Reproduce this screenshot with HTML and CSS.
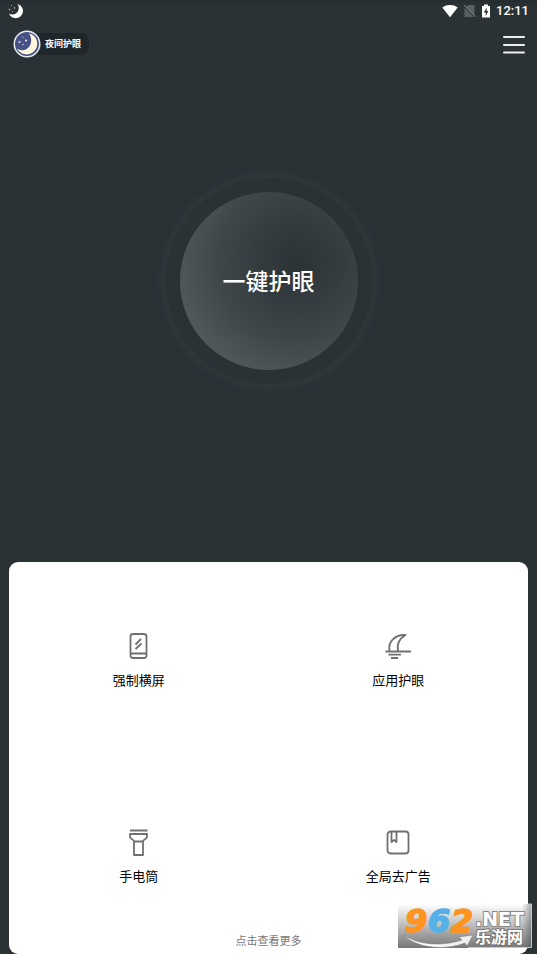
FILE: index.html
```html
<!DOCTYPE html>
<html lang="zh-CN">
<head>
<meta charset="utf-8">
<meta name="viewport" content="width=device-width, initial-scale=1">
<title>夜间护眼</title>
<link rel="stylesheet" href="styles.css">
</head>
<body>
<div class="status">
  <svg class="status-moon" width="16" height="16" viewBox="0 0 16 16" aria-hidden="true">
    <path d="M9.5 1A7.2 7.2 0 1 1 1 10.500C4 12.500 8 11.500 9.800 8.500C11.300 6 11 3 9.500 1Z" fill="#fff"/>
    <g fill="#b9bec0"><circle cx="1.500" cy="6.500" r=".8"/><circle cx="6.500" cy="5" r=".8"/><circle cx="3.500" cy="2.500" r=".5"/><circle cx="4.500" cy="8.500" r=".6"/></g>
  </svg>
  <div class="status-right">
    <svg width="16" height="14" viewBox="0 0 16 14" aria-hidden="true"><path d="M.3 3.500C4.500.2 11.500.2 15.700 3.500L8 13.300Z" fill="#fff"/></svg>
    <svg width="13" height="14" viewBox="0 0 13 14" aria-hidden="true"><path d="M5 1H11.500V13H1.500V4.500Z" fill="#596063"/><path d="M.5 1.500L12 13.500" stroke="#283033" stroke-width="1.500"/><path d="M1 1L12.500 13" stroke="#8b9092" stroke-width="1"/></svg>
    <svg width="10" height="14" viewBox="0 0 10 14" aria-hidden="true"><path d="M3 .5H7V2H9V13.500H1V2H3Z" fill="#fff"/><path d="M5.800 3.500L2.800 8.500H4.700V12L7.400 7H5.600Z" fill="#283033"/></svg>
    <span class="clock">12:11</span>
  </div>
</div>
<header class="header">
  <div class="brand">
    <svg class="brand-icon" width="28" height="28" viewBox="0 0 28 28" aria-hidden="true">
      <circle cx="14" cy="14" r="13.500" fill="#e9edf2"/>
      <circle cx="14" cy="14" r="12" fill="#465286"/>
      <path d="M16 3.300A10.700 10.700 0 1 1 4 18.500C8 21.500 14 20.500 16.700 16C19 12 18.500 7 16 3.300Z" fill="#fff8df"/>
      <g fill="#e8e7df"><circle cx="6.500" cy="12" r="1"/><circle cx="13" cy="10.500" r="1.100"/><circle cx="10" cy="7" r=".6"/><circle cx="10" cy="14.500" r=".7"/></g>
    </svg>
    <span class="brand-name">夜间护眼</span>
  </div>
  <button class="menu" type="button" aria-label="菜单">
    <svg width="24" height="20" viewBox="0 0 24 20"><path d="M2 3H22M2 11H22M2 18.500H22" stroke="#eceeee" stroke-width="2" stroke-linecap="round"/></svg>
  </button>
</header>
<main class="main">
  <section class="hero">
    <div class="ring"><button class="power" type="button">一键护眼</button></div>
  </section>
  <section class="sheet">
    <div class="tools">
      <button class="tool" type="button">
        <svg width="28" height="28" viewBox="0 0 28 28"><rect x="5.500" y="2" width="16" height="24" rx="2.500"/><path d="M5.500 21.500H21.500M10.500 12.500L16 7M10.500 17L16.500 11.500"/></svg>
        <span>强制横屏</span>
      </button>
      <button class="tool" type="button">
        <svg width="28" height="28" viewBox="0 0 28 28"><path d="M1.500 19.500H27M4.500 22.700H17M7 26H14M5.500 19C4 10.500 10 2.500 21.500 3C16.500 6 12.500 11.500 14 19"/></svg>
        <span>应用护眼</span>
      </button>
      <button class="tool" type="button">
        <svg width="28" height="28" viewBox="0 0 28 28"><path d="M5 2.500H22.500M5 6H22V9C22 11 18 11.500 18 13.500H9C9 11.500 5 11 5 9ZM9 13.500V27H18V13.500"/></svg>
        <span>手电筒</span>
      </button>
      <button class="tool" type="button">
        <svg width="28" height="28" viewBox="0 0 28 28"><rect x="3.500" y="3.500" width="21" height="22" rx="3"/><path d="M7.500 4V14L10 12L12.500 14V4"/></svg>
        <span>全局去广告</span>
      </button>
    </div>
    <a class="more" href="#">点击查看更多</a>
  </section>
</main>
<svg class="mark" width="134" height="44" viewBox="0 0 134 44" role="img" aria-label="962.NET 乐游网">
  <defs>
    <linearGradient id="shade" x1="0" y1="0" x2="0" y2="1"><stop offset="0" stop-color="#fff"/><stop offset=".4" stop-color="#c8c8c8"/><stop offset="1" stop-color="#777"/></linearGradient>
    <linearGradient id="swoosh" x1="0" y1="0" x2="1" y2="0"><stop offset="0" stop-color="#fff"/><stop offset="1" stop-color="#eee"/></linearGradient>
    <linearGradient id="edge" x1="0" y1="0" x2="1" y2="0"><stop offset="0" stop-color="#39434a" stop-opacity="0"/><stop offset="1" stop-color="#39434a" stop-opacity=".45"/></linearGradient>
  </defs>
  <rect width="134" height="44" fill="url(#shade)"/>
  <rect x="124" width="10" height="44" fill="url(#edge)"/>
  <path d="M130 0H133.500V43.500H70" fill="none" stroke="#c8c8c8"/>
  <path d="M6 31C22 42 46 42 64 36L61 33L75 31L69 42L67 39C46 47 18 44 6 31Z" fill="url(#swoosh)" stroke="#777" stroke-width=".5"/>
  <g class="mark-number"><text class="orange" x="7" y="28">9</text><text class="blue" x="30" y="28">6</text><text class="orange" x="53" y="28">2</text></g>
  <text class="mark-net" x="77" y="22">.NET</text>
  <text class="mark-name" x="77" y="39">乐游网</text>
</svg>
</body>
</html>
```

FILE: styles.css
```css
* {
  box-sizing: border-box;
}

body {
  margin: 0;
  min-height: 100vh;
  display: flex;
  flex-direction: column;
  position: relative;
  background: #2a3236;
  color: #fff;
  font-family: Roboto, "Noto Sans CJK SC", sans-serif;
}

button {
  border: 0;
  padding: 0;
  background: none;
  color: inherit;
  font: inherit;
  cursor: pointer;
}

svg {
  display: block;
}

.status {
  display: flex;
  justify-content: space-between;
  align-items: center;
  height: 22px;
  padding: 0 8px;
  background: linear-gradient(#252d30, #2a3236 6px);
}

.status-right {
  display: flex;
  align-items: center;
  gap: 5px;
}

.clock {
  font-size: 13px;
  line-height: 22px;
  font-weight: 500;
}

.header {
  display: flex;
  justify-content: space-between;
  align-items: center;
  height: 44px;
  padding: 0 11px 0 13px;
}

.brand {
  display: flex;
  align-items: center;
}

.brand-name {
  margin-left: -14px;
  padding: 0 8px 0 18px;
  border-radius: 8px;
  background: #1f272b;
  font-size: 9px;
  line-height: 22px;
  font-weight: 700;
}

.brand-icon {
  position: relative;
  z-index: 1;
}

.main {
  flex: 1;
  display: flex;
  flex-direction: column;
}

.hero {
  flex: 1;
  display: flex;
  justify-content: center;
  align-items: flex-start;
  padding: 106px 0 48px;
}

.ring {
  display: grid;
  place-items: center;
  width: 218px;
  height: 218px;
  border: 6px solid #2e363a;
  border-radius: 50%;
  box-shadow: 0 0 8px rgba(48, 57, 61, 0.5);
}

.power {
  width: 178px;
  height: 178px;
  padding-bottom: 2px;
  border-radius: 50%;
  background: radial-gradient(circle at 66% 39%, #2b3337 0, #353d40 28%, #3f4749 50%, #50585a 76%, #565d5e 100%);
  font-size: 23px;
  font-weight: 500;
}

.sheet {
  position: relative;
  margin: 0 9px;
  border-radius: 9px;
  background: #fff;
  color: #111;
}

.tools {
  display: grid;
  grid-template-columns: 1fr 1fr;
  grid-auto-rows: 196px;
}

.tool {
  display: flex;
  flex-direction: column;
  align-items: center;
  justify-content: center;
  gap: 12px;
  padding-top: 2px;
  color: #000;
  font-size: 13px;
  line-height: 18px;
}

.tool svg {
  fill: none;
  stroke: #707070;
  stroke-width: 1.8;
  stroke-linejoin: round;
}

.more {
  position: absolute;
  inset: auto 0 4px;
  margin: 0 auto;
  width: max-content;
  color: #777;
  font-size: 11px;
  line-height: 16px;
  text-decoration: none;
}

.mark {
  position: absolute;
  right: 5px;
  bottom: 6px;
  overflow: visible;
}

.mark-number {
  font: italic 700 32px "DejaVu Sans", sans-serif;
  stroke-width: 1.5;
}

.orange {
  fill: #ff9420;
  stroke: #ff9420;
}

.blue {
  fill: #55b0e8;
  stroke: #55b0e8;
}

.mark-net {
  font: 700 19px "DejaVu Sans", sans-serif;
  fill: #fff;
  stroke: #888;
  stroke-width: 2;
  paint-order: stroke;
}

.mark-name {
  font: 700 16px "Noto Sans CJK SC", sans-serif;
  fill: #fff;
  stroke: #777;
  stroke-width: 2;
  paint-order: stroke;
}
```
